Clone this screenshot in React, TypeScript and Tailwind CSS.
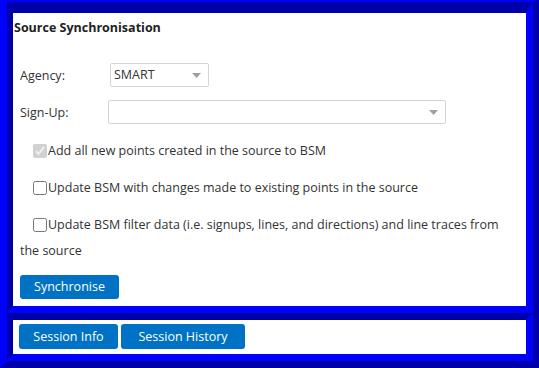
import React from "react";

const font = { fontFamily: '"Open Sans", "Noto Sans", Arial, sans-serif' };

function Arrow() {
  return (
    <svg width="9" height="5" viewBox="0 0 9 5" className="block">
      <path d="M0 0 L9 0 L4.5 5 Z" fill="#a0a0a0" />
    </svg>
  );
}

function Select({ value, width }: { value: string; width: string }) {
  return (
    <div
      className={`${width} h-[24px] border border-[#d4d4d4] rounded-[2px] bg-white flex items-center justify-between pl-[3px] pr-[7px] text-[#333]`}
    >
      <span className="pt-[1px]">{value}</span>
      <Arrow />
    </div>
  );
}

export default function App() {
  return (
    <div
      className="w-[539px] h-[368px] bg-white border-t-2 border-l-[7px] border-r-[6px] border-b-[7px] border-t-[#0000ff] border-l-[#0000ff] border-r-[#0000ab] border-b-[#0000ab] flex flex-col text-[12.5px] text-[#333]"
      style={font}
    >
      <div className="h-[311px] border-t-[11px] border-l-[6px] border-r-[7px] border-b-[7px] border-t-[#0000ab] border-l-[#0000ab] border-r-[#0000ff] border-b-[#0000ff] bg-white">
        <div className="h-[26px] leading-[26px] pt-[2px] pl-[1px] font-bold text-[#222]">Source Synchronisation</div>
        <div className="mt-[24px] flex items-center pl-[7px] h-[24px]">
          <div className="w-[90px] pt-[2px]">Agency:</div>
          <Select value="SMART" width="w-[99px]" />
        </div>
        <div className="mt-[13px] flex items-center pl-[7px] h-[24px]">
          <div className="w-[88px] pt-[2px]">Sign-Up:</div>
          <Select value="" width="w-[338px]" />
        </div>
        <div className="mt-[14px] pl-[7px] pr-[8px] leading-[26px] indent-[9px]">
          <input type="checkbox" defaultChecked disabled className="align-middle ml-[4px] mr-[1px] w-[14px] h-[14px] relative -top-[1px]" />
          Add all new points created in the source to BSM
        </div>
        <div className="mt-[11px] pl-[7px] pr-[8px] leading-[26px] indent-[9px]">
          <input type="checkbox" className="align-middle ml-[4px] mr-[1px] w-[14px] h-[14px] relative -top-[1px]" />
          Update BSM with changes made to existing points in the source
        </div>
        <div className="mt-[11px] pl-[7px] pr-[8px] leading-[26px] indent-[9px]">
          <input type="checkbox" className="align-middle ml-[4px] mr-[1px] w-[14px] h-[14px] relative -top-[1px]" />
          Update BSM filter data (i.e. signups, lines, and directions) and line traces from the source
        </div>
        <div className="mt-[11px] pl-[7px]">
          <button className="w-[99px] h-[24px] rounded-[3px] bg-[#0072c6] text-white text-[12.5px] pt-[1px]">Synchronise</button>
        </div>
      </div>
      <div className="h-[48px] border-[7px] border-l-[6px] border-t-[#0000ab] border-l-[#0000ab] border-r-[#0000ff] border-b-[#0000ff] bg-white pt-[4px] pl-[6px] flex gap-[3px] items-start">
        <button className="w-[99px] h-[25px] rounded-[3px] bg-[#0072c6] text-white text-[12.5px] pt-[2px]">Session Info</button>
        <button className="w-[124px] h-[25px] rounded-[3px] bg-[#0072c6] text-white text-[12.5px] pt-[2px]">Session History</button>
      </div>
    </div>
  );
}
